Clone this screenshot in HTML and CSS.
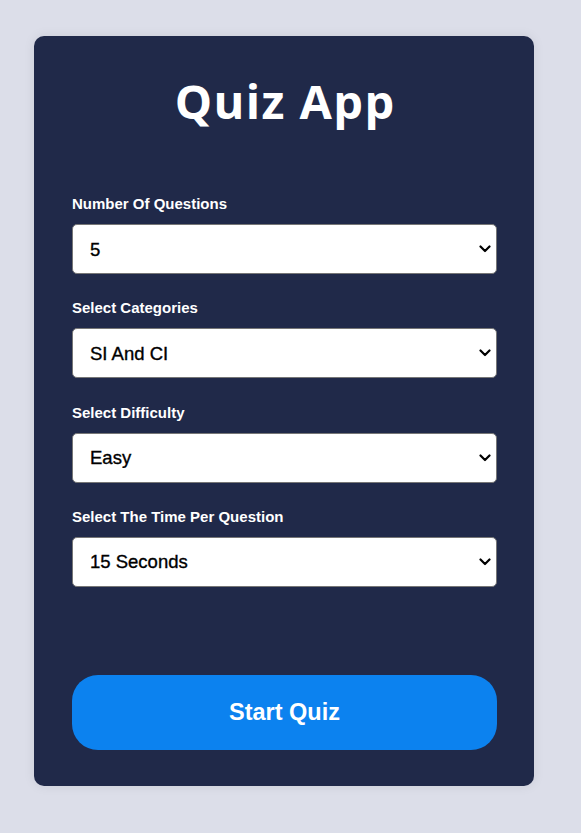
FILE: index.html
```html
<!DOCTYPE html>
<html lang="en">
<head>
<meta charset="utf-8">
<title>Quiz App</title>
<link rel="stylesheet" href="styles.css">
</head>
<body>
<main class="card">
  <h1 class="title">Quiz App</h1>
  <form class="form">
    <div class="field">
      <label class="label" for="num">Number Of Questions</label>
      <div class="select-wrap">
        <select class="select" id="num"><option>5</option><option>10</option></select>
        <svg class="chevron" viewBox="0 0 12 8" width="12" height="8" aria-hidden="true"><path d="M1.5 1.5 L6 6 L10.5 1.5"/></svg>
      </div>
    </div>
    <div class="field">
      <label class="label" for="cat">Select Categories</label>
      <div class="select-wrap">
        <select class="select" id="cat"><option>SI And CI</option></select>
        <svg class="chevron" viewBox="0 0 12 8" width="12" height="8" aria-hidden="true"><path d="M1.5 1.5 L6 6 L10.5 1.5"/></svg>
      </div>
    </div>
    <div class="field">
      <label class="label" for="diff">Select Difficulty</label>
      <div class="select-wrap">
        <select class="select" id="diff"><option>Easy</option><option>Medium</option><option>Hard</option></select>
        <svg class="chevron" viewBox="0 0 12 8" width="12" height="8" aria-hidden="true"><path d="M1.5 1.5 L6 6 L10.5 1.5"/></svg>
      </div>
    </div>
    <div class="field">
      <label class="label" for="time">Select The Time Per Question</label>
      <div class="select-wrap">
        <select class="select" id="time"><option>15 Seconds</option><option>30 Seconds</option></select>
        <svg class="chevron" viewBox="0 0 12 8" width="12" height="8" aria-hidden="true"><path d="M1.5 1.5 L6 6 L10.5 1.5"/></svg>
      </div>
    </div>
    <button type="button" class="start">Start Quiz</button>
  </form>
</main>
</body>
</html>
```
FILE: styles.css
```css
html, body {
  margin: 0;
  padding: 0;
}
body {
  background: #dcdee9;
  font-family: "Liberation Sans", Arial, sans-serif;
  min-height: 833px;
  padding: 36px 0 0 34px;
  box-sizing: border-box;
}
.card {
  width: 500px;
  height: 750px;
  box-sizing: border-box;
  background: #202949;
  border-radius: 10px;
  box-shadow: 0 0 12px rgba(0, 0, 0, 0.08);
  padding: 40px 37px 0 38px;
  display: flex;
  flex-direction: column;
}
.title {
  margin: 0;
  text-align: center;
  color: #ffffff;
  font-family: "Open Sans", sans-serif;
  font-weight: 700;
  font-size: 47px;
  letter-spacing: 1.4px;
  padding-left: 1.4px;
  line-height: 50px;
}
.form {
  margin-top: 69px;
  display: flex;
  flex-direction: column;
}
.field {
  display: flex;
  flex-direction: column;
  margin-bottom: 25.3px;
}
.label {
  color: #ffffff;
  font-size: 15px;
  font-weight: 700;
  line-height: 18px;
  margin-bottom: 11px;
}
.select-wrap {
  position: relative;
  display: flex;
}
.select {
  -webkit-appearance: none;
  appearance: none;
  height: 50px;
  width: 100%;
  border: 1px solid #767676;
  border-radius: 5px;
  background: #ffffff;
  color: #000000;
  font-family: "Liberation Sans", Arial, sans-serif;
  font-size: 18.5px;
  -webkit-text-stroke: 0.35px #000000;
  padding: 0 30px 0 17px;
}
.chevron {
  position: absolute;
  right: 6px;
  top: 21px;
  pointer-events: none;
  fill: none;
  stroke: #000000;
  stroke-width: 2.2;
  stroke-linecap: round;
  stroke-linejoin: round;
}
.start {
  margin-top: 62.7px;
  height: 75px;
  border: none;
  border-radius: 26px;
  background: #0c82ef;
  color: #ffffff;
  font-family: "Liberation Sans", Arial, sans-serif;
  font-weight: 700;
  font-size: 23.5px;
}
```
